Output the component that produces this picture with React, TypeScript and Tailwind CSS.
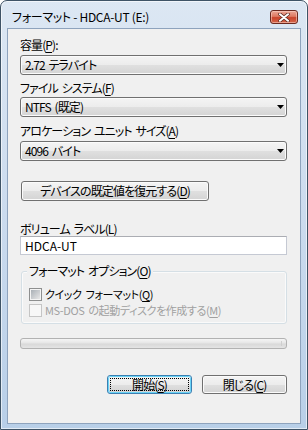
import React from 'react';

const btnBg =
  'bg-[linear-gradient(to_bottom,#f4f4f4_0%,#ececec_50%,#e0e0e0_50%,#d4d4d4_100%)]';

function Mn({ c }: { c: string }) {
  return <span className="underline underline-offset-[2px]">{c}</span>;
}

function Combo({ value }: { value: string }) {
  return (
    <div
      className={`flex h-[20px] items-center rounded-[3px] border border-[#707070] pl-[4px] pr-[2px] shadow-[inset_0_0_0_1px_#fbfbfb] ${btnBg}`}
    >
      <span className="flex-1 leading-[16px]">{value}</span>
      <svg width="7" height="4" viewBox="0 0 7 4">
        <path d="M0 0h7L3.5 4z" fill="#000" />
      </svg>
    </div>
  );
}

function CloseButton() {
  return (
    <div className="flex h-[14px] w-[28px] items-center justify-center rounded-[3px] border border-[#6b2a20] bg-[linear-gradient(to_bottom,#eba796_0%,#de7a62_45%,#c9442b_55%,#d4654a_100%)] shadow-[inset_0_0_0_1px_rgba(255,220,210,0.5)]">
      <svg width="12" height="9" viewBox="0 0 12 9">
        <path d="M2 1.2L10 7.8M10 1.2L2 7.8" stroke="#5a2a22" strokeWidth="3.4" strokeLinecap="round" />
        <path d="M2 1.2L10 7.8M10 1.2L2 7.8" stroke="#fff" strokeWidth="2" strokeLinecap="round" />
      </svg>
    </div>
  );
}

export default function App() {
  return (
    <div className="h-[430px] w-[308px] bg-white font-['Noto_Sans_CJK_JP',sans-serif] text-[12px] text-black [font-feature-settings:'palt']">
      <div className="flex h-[430px] w-[308px] flex-col rounded-t-[7px] border border-[#3e5366] bg-gradient-to-b from-[#dce7f3] via-[#cbdbee] to-[#b8cfe8] shadow-[inset_0_0_0_1px_rgba(255,255,255,0.6)]">
        {/* title bar */}
        <div className="flex h-[27px] items-center pl-[11px] pr-[9px] pt-[5px]">
          <span className="flex-1 leading-[16px] tracking-[-0.3px]">フォーマット - HDCA-UT (E:)</span>
          <CloseButton />
        </div>

        {/* client */}
        <div className="mx-[6px] flex h-[396px] flex-col border border-[#8ea3bd] bg-[#f0f0f0] pl-[12px] pr-[13px] pt-[8px] tracking-[-0.9px] [word-spacing:2px]">
          <div className="h-[16px] leading-[16px]">
            容量(<Mn c="P" />):
          </div>
          <div className="mt-[2px]">
            <Combo value="2.72 テラバイト" />
          </div>

          <div className="mt-[5px] h-[16px] leading-[16px]">
            ファイル システム(<Mn c="F" />)
          </div>
          <div className="mt-[1px]">
            <Combo value="NTFS (既定)" />
          </div>

          <div className="mt-[6px] h-[16px] leading-[16px]">
            アロケーション ユニット サイズ(<Mn c="A" />)
          </div>
          <div className="mt-[2px]">
            <Combo value="4096 バイト" />
          </div>

          <div
            className={`ml-[1px] mt-[20px] flex h-[20px] w-[188px] items-center justify-center rounded-[3px] border border-[#707070] shadow-[inset_0_0_0_1px_#fbfbfb] ${btnBg}`}
          >
            デバイスの既定値を復元する(<Mn c="D" />)
          </div>

          <div className="mt-[21px] h-[14px] leading-[14px]">
            ボリューム ラベル(<Mn c="L" />)
          </div>
          <div className="flex h-[19px] items-center border border-[#c5c9d3] border-t-[#abadb3] bg-white pl-[4px] leading-[16px] tracking-normal">
            HDCA-UT
          </div>

          {/* group box */}
          <div className="relative ml-[1px] mt-[16px] flex h-[53px] flex-col rounded-[3px] border border-[#d5dfe5] pl-[7px] pt-[14px] shadow-[inset_0_0_0_1px_#fafafa]">
            <span className="absolute left-[5px] top-[-9px] bg-[#f0f0f0] px-[2px] leading-[16px]">
              フォーマット オプション(<Mn c="O" />)
            </span>
            <div className="flex h-[16px] items-center text-[11px] tracking-[-0.4px]">
              <div className="flex h-[13px] w-[13px] items-center justify-center border border-[#8e8f8f] bg-[#f4f4f4]">
                <div className="h-[9px] w-[9px] bg-gradient-to-br from-[#aab0b6] to-[#e8e8e8]" />
              </div>
              <span className="ml-[3px] leading-[16px]">
                クイック フォーマット(<Mn c="Q" />)
              </span>
            </div>
            <div className="flex h-[16px] items-center text-[11px] tracking-[-0.4px] text-[#a0a0a0]">
              <div className="flex h-[13px] w-[13px] items-center justify-center border border-[#c5c5c5] bg-[#f7f7f7]" />
              <span className="ml-[3px] leading-[16px]">
                MS-DOS の起動ディスクを作成する(<Mn c="M" />)
              </span>
            </div>
          </div>

          {/* progress bar */}
          <div className="mt-[14px] flex h-[11px] justify-end rounded-[3px] border border-[#b2b2b2] bg-[linear-gradient(to_bottom,#f5f5f5_0%,#e6e6e6_45%,#d9d9d9_55%,#e4e4e4_100%)] pr-[2px]">
            <div className="my-[2px] w-[3px] border-l border-[#cfcfcf]" />
          </div>

          {/* buttons */}
          <div className="mt-[26px] flex justify-end gap-[10px]">
            <div className="h-[19px] w-[85px] rounded-[3px] border border-[#3c7fb1] bg-[linear-gradient(to_bottom,#eaf6fd_0%,#d9f0fc_50%,#bee6fd_50%,#a7d9f5_100%)] p-[1px]">
              <div
                className={`flex h-full w-full items-center justify-center rounded-[2px] p-[1px] ${btnBg} shadow-[0_0_0_1px_#69d3f6]`}
              >
                <div className="flex h-full w-full items-center justify-center border border-dotted border-black leading-[13px]">
                  開始(<Mn c="S" />)
                </div>
              </div>
            </div>
            <div
              className={`flex h-[19px] w-[85px] items-center justify-center rounded-[3px] border border-[#707070] shadow-[inset_0_0_0_1px_#fbfbfb] ${btnBg}`}
            >
              閉じる(<Mn c="C" />)
            </div>
          </div>
        </div>
      </div>
    </div>
  );
}
